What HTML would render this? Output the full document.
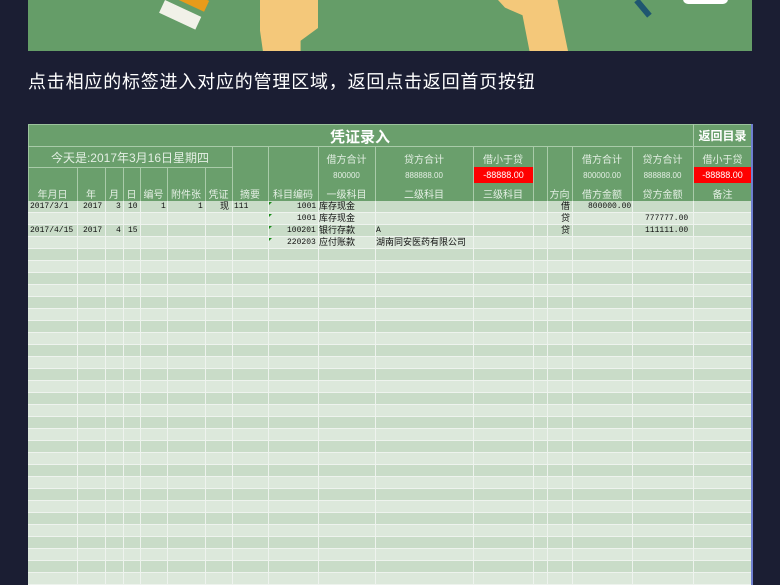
<!DOCTYPE html>
<html><head><meta charset="utf-8"><style>
*{margin:0;padding:0;box-sizing:border-box}
body{width:780px;height:585px;overflow:hidden;background:#1b1e33;font-family:"Liberation Sans","Noto Sans CJK SC",sans-serif;position:relative}
.a{position:absolute}
.banner{left:28px;top:0;width:724px;height:51px;background:#659d68;overflow:hidden}
.t{color:#fff;font-size:18px;left:28px;top:68px;letter-spacing:0.8px}
.tbl{left:28px;top:124px;width:724px;height:461px;background:#6a9f6c;border:1px solid #9cc39d}
.body{left:28px;top:201px;width:724px;height:384px;background:repeating-linear-gradient(#c9dcc8 0 11px,#eef3ee 11px 12px,#dce8db 12px 23px,#eef3ee 23px 24px)}
.v{width:1px;background:#a9cba9}
.vb{width:1px;background:#eef3ee}
.h{font-size:10px;color:#e4efe4;text-align:center;white-space:nowrap}
.d{font-size:8px;color:#111;white-space:nowrap;font-family:"Liberation Mono","Noto Sans CJK SC",monospace;line-height:11px}
.c{font-family:"Liberation Sans","Noto Sans CJK SC",sans-serif;font-size:9px}
.red{background:#f00;color:#fff;font-size:9px;text-align:center;line-height:16px}
</style></head><body>
<div class="a banner">
  <div class="a" style="left:232px;top:0;width:58px;height:51px;background:#f4c87a;clip-path:polygon(0 0,100% 0,100% 55%,70% 80%,70% 100%,5% 100%,0 60%)"></div>
  <div class="a" style="left:470px;top:0;width:70px;height:51px;background:#f4c87a;clip-path:polygon(0 0,85% 0,100% 100%,45% 100%,35% 30%,10% 15%)"></div>
  <div class="a" style="left:137px;top:0;width:40px;height:14px;background:#f1f1e8;transform:rotate(25deg);transform-origin:0 0"></div>
  <div class="a" style="left:150px;top:-6px;width:30px;height:12px;background:#e89b1a;transform:rotate(25deg)"></div>
  <div class="a" style="left:612px;top:-2px;width:6px;height:20px;background:#1f5670;transform:rotate(-40deg)"></div>
  <div class="a" style="left:655px;top:-6px;width:45px;height:10px;border-radius:6px;background:#fff"></div>
</div>
<div class="a t">点击相应的标签进入对应的管理区域，返回点击返回首页按钮</div>
<div class="a tbl"></div>
<div class="a" style="left:28px;top:146px;width:724px;height:1px;background:#a9cba9"></div>
<div class="a" style="left:320px;top:126px;width:80px;color:#fff;font-weight:bold;font-size:15px;text-align:center">凭证录入</div>
<div class="a v" style="left:693px;top:124px;height:22px"></div>
<div class="a" style="left:693px;top:127px;width:59px;color:#fff;font-weight:bold;font-size:12px;text-align:center">返回目录</div>
<div class="a h" style="left:28px;top:149px;width:204px;font-size:12px">今天是:2017年3月16日星期四</div>
<div class="a" style="left:28px;top:167px;width:204px;height:1px;background:#a9cba9"></div>
<div class="a body"></div>
<div class="a v" style="left:77px;top:167px;height:34px"></div><div class="a vb" style="left:77px;top:201px;height:384px"></div>
<div class="a v" style="left:105px;top:167px;height:34px"></div><div class="a vb" style="left:105px;top:201px;height:384px"></div>
<div class="a v" style="left:123px;top:167px;height:34px"></div><div class="a vb" style="left:123px;top:201px;height:384px"></div>
<div class="a v" style="left:140px;top:167px;height:34px"></div><div class="a vb" style="left:140px;top:201px;height:384px"></div>
<div class="a v" style="left:167px;top:167px;height:34px"></div><div class="a vb" style="left:167px;top:201px;height:384px"></div>
<div class="a v" style="left:205px;top:167px;height:34px"></div><div class="a vb" style="left:205px;top:201px;height:384px"></div>
<div class="a v" style="left:232px;top:146px;height:55px"></div><div class="a vb" style="left:232px;top:201px;height:384px"></div>
<div class="a v" style="left:268px;top:146px;height:55px"></div><div class="a vb" style="left:268px;top:201px;height:384px"></div>
<div class="a v" style="left:318px;top:146px;height:55px"></div><div class="a vb" style="left:318px;top:201px;height:384px"></div>
<div class="a v" style="left:375px;top:146px;height:55px"></div><div class="a vb" style="left:375px;top:201px;height:384px"></div>
<div class="a v" style="left:473px;top:146px;height:55px"></div><div class="a vb" style="left:473px;top:201px;height:384px"></div>
<div class="a v" style="left:533px;top:146px;height:55px"></div><div class="a vb" style="left:533px;top:201px;height:384px"></div>
<div class="a v" style="left:547px;top:146px;height:55px"></div><div class="a vb" style="left:547px;top:201px;height:384px"></div>
<div class="a v" style="left:572px;top:146px;height:55px"></div><div class="a vb" style="left:572px;top:201px;height:384px"></div>
<div class="a v" style="left:632px;top:146px;height:55px"></div><div class="a vb" style="left:632px;top:201px;height:384px"></div>
<div class="a v" style="left:693px;top:146px;height:55px"></div><div class="a vb" style="left:693px;top:201px;height:384px"></div>
<div class="a" style="left:751px;top:124px;width:2px;height:461px;background:#6f7fd0"></div>
<div class="a h" style="left:28px;top:186px;width:49px">年月日</div>
<div class="a h" style="left:77px;top:186px;width:28px">年</div>
<div class="a h" style="left:105px;top:186px;width:18px">月</div>
<div class="a h" style="left:123px;top:186px;width:17px">日</div>
<div class="a h" style="left:140px;top:186px;width:27px">编号</div>
<div class="a h" style="left:167px;top:186px;width:38px">附件张</div>
<div class="a h" style="left:205px;top:186px;width:27px">凭证</div>
<div class="a h" style="left:232px;top:186px;width:36px">摘要</div>
<div class="a h" style="left:268px;top:186px;width:50px">科目编码</div>
<div class="a h" style="left:318px;top:151px;width:57px">借方合计</div>
<div class="a h" style="left:318px;top:171px;width:57px;font-size:8px">800000</div>
<div class="a h" style="left:318px;top:186px;width:57px">一级科目</div>
<div class="a h" style="left:375px;top:151px;width:98px">贷方合计</div>
<div class="a h" style="left:375px;top:171px;width:98px;font-size:8px">888888.00</div>
<div class="a h" style="left:375px;top:186px;width:98px">二级科目</div>
<div class="a h" style="left:473px;top:151px;width:60px">借小于贷</div>
<div class="a red" style="left:474px;top:167px;width:59px;height:16px">-88888.00</div>
<div class="a h" style="left:473px;top:186px;width:60px">三级科目</div>
<div class="a h" style="left:547px;top:186px;width:25px">方向</div>
<div class="a h" style="left:572px;top:151px;width:60px">借方合计</div>
<div class="a h" style="left:572px;top:171px;width:60px;font-size:8px">800000.00</div>
<div class="a h" style="left:572px;top:186px;width:60px">借方金额</div>
<div class="a h" style="left:632px;top:151px;width:61px">贷方合计</div>
<div class="a h" style="left:632px;top:171px;width:61px;font-size:8px">888888.00</div>
<div class="a h" style="left:632px;top:186px;width:61px">贷方金额</div>
<div class="a h" style="left:693px;top:151px;width:59px">借小于贷</div>
<div class="a red" style="left:694px;top:167px;width:57px;height:16px">-88888.00</div>
<div class="a h" style="left:693px;top:186px;width:59px">备注</div>
<div class="a d" style="left:30px;top:201px">2017/3/1</div>
<div class="a d" style="left:83px;top:201px">2017</div>
<div class="a d" style="left:116px;top:201px">3</div>
<div class="a d" style="left:128px;top:201px">10</div>
<div class="a d" style="left:161px;top:201px">1</div>
<div class="a d" style="left:198px;top:201px">1</div>
<div class="a d c" style="left:220px;top:201px">现</div>
<div class="a d" style="left:234px;top:201px">111</div>
<div class="a d" style="left:297px;top:201px">1001</div><div class="a d c" style="left:319px;top:201px">库存现金</div>
<div class="a d" style="left:297px;top:213px">1001</div><div class="a d c" style="left:319px;top:213px">库存现金</div>
<div class="a d" style="left:30px;top:225px">2017/4/15</div>
<div class="a d" style="left:83px;top:225px">2017</div>
<div class="a d" style="left:116px;top:225px">4</div>
<div class="a d" style="left:128px;top:225px">15</div>
<div class="a d" style="left:287px;top:225px">100201</div><div class="a d c" style="left:319px;top:225px">银行存款</div>
<div class="a d" style="left:376px;top:225px">A</div>
<div class="a d" style="left:287px;top:237px">220203</div><div class="a d c" style="left:319px;top:237px">应付账款</div>
<div class="a d c" style="left:376px;top:237px">湖南同安医药有限公司</div>
<div class="a d c" style="left:561px;top:201px">借</div>
<div class="a d c" style="left:561px;top:213px">贷</div>
<div class="a d c" style="left:561px;top:225px">贷</div>
<div class="a d" style="left:588px;top:201px">800000.00</div>
<div class="a d" style="left:645px;top:213px">777777.00</div>
<div class="a d" style="left:645px;top:225px">111111.00</div>
<div class="a" style="left:269px;top:202px;border-left:3px solid #1a8a1a;border-bottom:3px solid transparent"></div>
<div class="a" style="left:269px;top:214px;border-left:3px solid #1a8a1a;border-bottom:3px solid transparent"></div>
<div class="a" style="left:269px;top:226px;border-left:3px solid #1a8a1a;border-bottom:3px solid transparent"></div>
<div class="a" style="left:269px;top:238px;border-left:3px solid #1a8a1a;border-bottom:3px solid transparent"></div>
</body></html>
